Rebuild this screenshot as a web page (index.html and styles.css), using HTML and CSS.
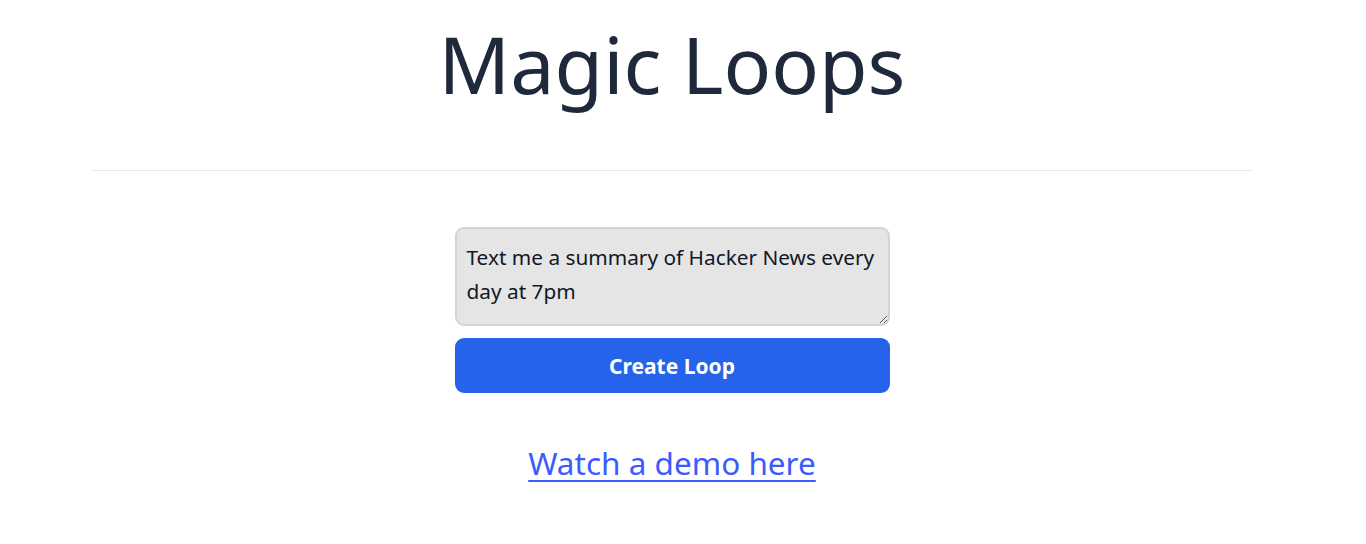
FILE: index.html
```html
<!DOCTYPE html>
<html>
<head>
<meta charset="utf-8">
<link rel="stylesheet" href="styles.css">
</head>
<body>
<main class="page">
  <h1 class="title">Magic Loops</h1>
  <hr class="rule">
  <form class="form">
    <textarea class="prompt">Text me a summary of Hacker News every day at 7pm</textarea>
    <button type="button" class="create">Create Loop</button>
  </form>
  <a class="demo" href="#">Watch a demo here</a>
</main>
</body>
</html>
```
FILE: styles.css
```css
html, body {
  margin: 0;
  padding: 0;
  background: #ffffff;
}
body {
  font-family: "Noto Sans", "Open Sans", sans-serif;
  color: #1e293b;
}
.page {
  box-sizing: border-box;
  max-width: 1344px;
  display: flex;
  flex-direction: column;
  align-items: center;
  padding: 0 91px;
}
.title {
  margin: 9px 0 0;
  font-size: 79px;
  font-weight: 400;
  line-height: 110px;
  color: #1e293b;
}
.rule {
  align-self: stretch;
  margin: 51px 0 0;
  border: 0;
  border-top: 1px solid #e5e7eb;
  height: 0;
}
.form {
  margin-top: 56px;
  width: 435px;
  display: flex;
  flex-direction: column;
  gap: 12px;
}
.prompt {
  box-sizing: border-box;
  width: 100%;
  height: 99px;
  padding: 11px 10px;
  border: 2px solid #d4d4d4;
  border-radius: 9px;
  background: #e5e5e5;
  font-family: "Noto Sans", "Open Sans", sans-serif;
  font-size: 20.8px;
  line-height: 34px;
  color: #111827;
  resize: vertical;
}
.create {
  height: 55px;
  border: 0;
  border-radius: 9px;
  background: #2563eb;
  color: #ffffff;
  font-family: "Noto Sans", "Open Sans", sans-serif;
  font-weight: 700;
  font-size: 21px;
}
.demo {
  margin-top: 48px;
  font-size: 31.5px;
  color: #3b5bfc;
  text-decoration: underline;
  text-underline-offset: 5px;
  text-decoration-thickness: 2px;
}
```
